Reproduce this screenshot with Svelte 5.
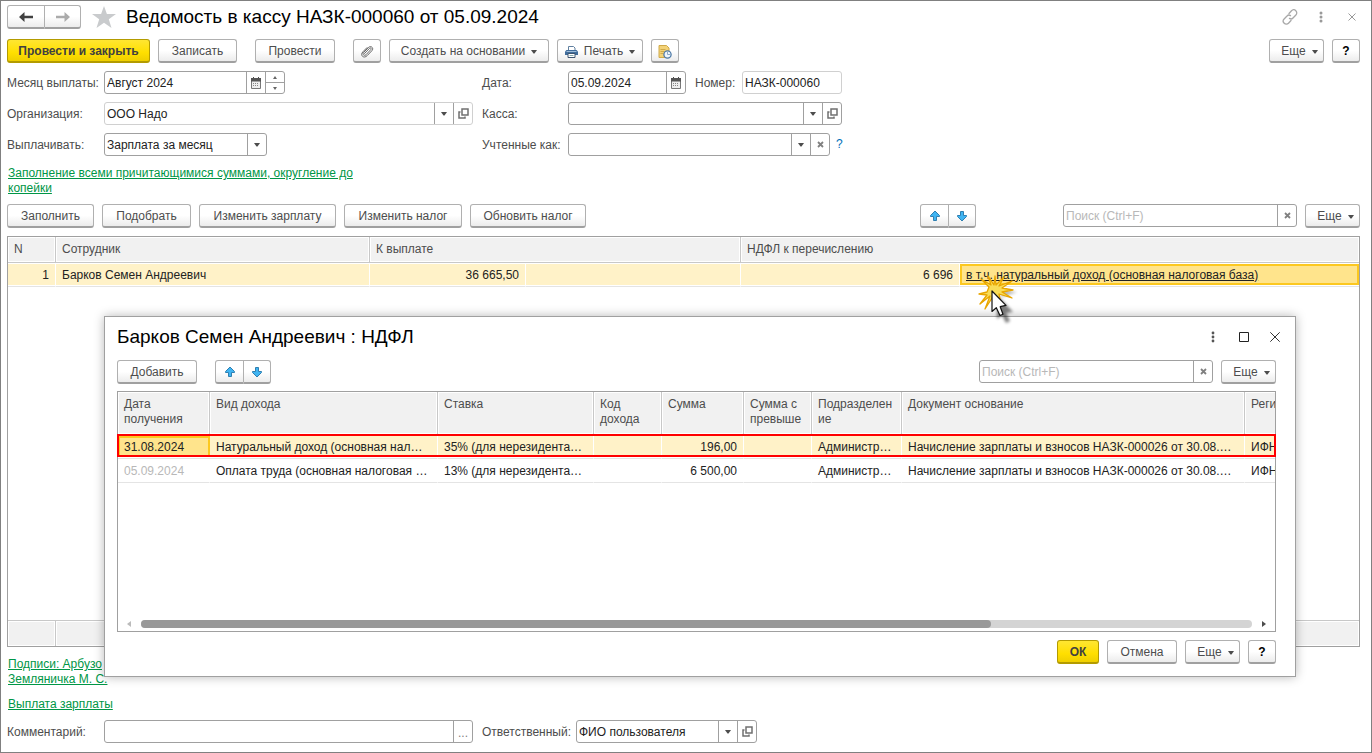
<script>
  let payMonth = $state('Август 2024');
  let docDate = $state('05.09.2024');
  let docNumber = $state('НАЗК-000060');
  let comment = $state('');
  let search = $state('');
  let dialogSearch = $state('');

  const incomeRows = [
    {
      date: '31.08.2024', kind: 'Натуральный доход (основная нал…',
      rate: '35% (для нерезидента…', sum: '196,00', dept: 'Администр…',
      doc: 'Начисление зарплаты и взносов НАЗК-000026 от 30.08.…', reg: 'ИФНС', selected: true
    },
    {
      date: '05.09.2024', kind: 'Оплата труда (основная налоговая …',
      rate: '13% (для нерезидента…', sum: '6 500,00', dept: 'Администр…',
      doc: 'Начисление зарплаты и взносов НАЗК-000026 от 30.08.…', reg: 'ИФНС', selected: false
    }
  ];
</script>

{#snippet caret()}
  <svg class="caret" width="6" height="4" viewBox="0 0 6 4" aria-hidden="true"><path d="M0 0h6L3.5 3.5h-1z" fill="#4d4d4d" /></svg>
{/snippet}

{#snippet calendar()}
  <svg width="10" height="12" viewBox="0 0 10 12" aria-hidden="true">
    <path d="M2 0h1v2H2zM7 0h1v2H7z" fill="#4d4d4d" />
    <path d="M.5 1.5h9v10h-9z" fill="#eee" stroke="#777" />
    <path d="M0 1h10v3.500H0z" fill="#555" />
    <path d="M2 6.500h6M2 8.500h6" stroke="#888" stroke-dasharray="1 1" />
  </svg>
{/snippet}

{#snippet openIcon()}
  <svg width="11" height="11" viewBox="0 0 11 11" fill="none" stroke="#707070" stroke-width="1.500" aria-hidden="true">
    <path d="M4 1h6v6H4z" /><path d="M2.500 4H1v6h6V8.500" />
  </svg>
{/snippet}

{#snippet cross()}
  <svg width="7" height="7" viewBox="0 0 7 7" aria-hidden="true"><path d="M1 1l5 5M6 1L1 6" stroke="#808080" stroke-width="1.800" /></svg>
{/snippet}

{#snippet moveButtons()}
  <div class="pair">
    <button class="btn" aria-label="Переместить вверх">
      <svg width="12" height="12" viewBox="0 0 12 12"><path d="M6 1L10.500 5.500v1H7.500v4h-3v-4h-3v-1z" fill="#3fb4f2" stroke="#2f7fb0" stroke-linejoin="round" /></svg>
    </button>
    <button class="btn" aria-label="Переместить вниз">
      <svg width="12" height="12" viewBox="0 0 12 12"><path d="M6 11L1.500 6.500v-1h3v-4h3v4h3v1z" fill="#3fb4f2" stroke="#2f7fb0" stroke-linejoin="round" /></svg>
    </button>
  </div>
{/snippet}

{#snippet more()}
  <button class="btn more">Еще {@render caret()}</button>
{/snippet}

<main class="window">
  <header class="titlebar">
    <div class="pair nav">
      <button class="btn" aria-label="Назад">
        <svg width="14" height="12" viewBox="0 0 14 12"><path d="M0 6l5.500-5v3.700H14v2.600H5.500V11z" fill="#404040" /></svg>
      </button>
      <button class="btn" aria-label="Вперед">
        <svg width="14" height="12" viewBox="0 0 14 12"><path d="M14 6L8.500 1v3.700H0v2.600h8.500V11z" fill="#ababab" /></svg>
      </button>
    </div>
    <button class="plain star" aria-label="В избранное">
      <svg width="24" height="22" viewBox="0 0 24 22"><path d="M12 0l2.900 8H24l-7.200 5.200L19.500 22 12 16.700 4.500 22l2.700-8.800L0 8h9.100z" fill="#c9cbcd" /></svg>
    </button>
    <h1>Ведомость в кассу НАЗК-000060 от 05.09.2024</h1>
    <div class="winicons push">
      <button class="plain" aria-label="Ссылка">
        <svg width="16" height="16" viewBox="0 0 16 16" fill="none" stroke="#a8a8a8" stroke-width="1.300" stroke-linecap="round">
          <path d="M7 4.500l2.500-2.700a2.900 2.900 0 0 1 4.400 4.200L11 9a2.700 2.700 0 0 1-3.500.4" />
          <path d="M9 11.500l-2.500 2.700a2.900 2.900 0 0 1-4.400-4.200L5 7a2.700 2.700 0 0 1 3.500-.4" />
        </svg>
      </button>
      <button class="plain" aria-label="Меню">
        <svg width="4" height="12" viewBox="0 0 4 12" fill="#999"><circle cx="2" cy="2" r="1.500" /><circle cx="2" cy="6" r="1.500" /><circle cx="2" cy="10" r="1.500" /></svg>
      </button>
      <button class="plain" aria-label="Закрыть">
        <svg width="8" height="8" viewBox="0 0 8 8"><path d="M.5.5l7 7M7.500.5l-7 7" stroke="#999" /></svg>
      </button>
    </div>
  </header>

  <div class="toolbar">
    <button class="btn primary w143">Провести и закрыть</button>
    <button class="btn w79">Записать</button>
    <button class="btn w80 apart">Провести</button>
    <button class="btn icon apart" aria-label="Файлы">
      <svg width="13" height="13" viewBox="0 0 13 13" fill="none" stroke="#666" stroke-linecap="round"><path d="M3.500 8.500l5-5.200c1-1 2.300.2 1.400 1.200L5 9.700c-1.700 1.700-4-.5-2.400-2.200L7.300 2.600C9.800 0 13.300 3 10.900 5.700L6.300 10.500c-2 2-3.800 1.700-4.800.8-1.100-1-1.200-2.900.4-4.500L6 2.600" /></svg>
    </button>
    <button class="btn w160">Создать на основании {@render caret()}</button>
    <button class="btn w86">
      <svg width="13" height="12" viewBox="0 0 13 12" aria-hidden="true">
        <path d="M3.500 4V.5h5l1.500 1.500V4" fill="#fff" stroke="#5f7f9f" />
        <path d="M1.500 4h10L13 5.500V9H0V5.500z" fill="#3f6c9b" /><path d="M1.500 5.500h10" stroke="#9dbbd8" />
        <path d="M3 7.500h7v4H3z" fill="#fff" stroke="#3d5570" /><path d="M4.500 9.500h4" stroke="#8aa" />
      </svg>
      Печать {@render caret()}
    </button>
    <button class="btn icon" aria-label="Отчеты">
      <svg width="14" height="14" viewBox="0 0 14 14"><path d="M1 .5h7.500L11 3v9.500H1z" fill="#f3d277" stroke="#d0aa4a" /><path d="M2.500 4.500h5M2.500 6.500h4M2.500 8.500h3" stroke="#d0aa4a" /><circle cx="9.500" cy="9.500" r="3.600" fill="#eef5fb" stroke="#4f7ba8" stroke-width="1.300" /><path d="M9.500 7v2.500H12" fill="none" stroke="#8fa9c4" /></svg>
    </button>
    <div class="group push">
      {@render more()}
      <button class="btn icon help">?</button>
    </div>
  </div>

  <div class="form">
    <div class="line">
      <div class="left">
        <label for="month">Месяц выплаты:</label>
        <div class="field w181">
          <input id="month" bind:value={payMonth} />
          <button aria-label="Выбрать месяц">{@render calendar()}</button>
          <div class="spin">
            <button aria-label="Следующий месяц"><svg width="4" height="3" viewBox="0 0 4 3"><path d="M2 0l2 3H0z" fill="#666" /></svg></button>
            <button aria-label="Предыдущий месяц"><svg width="4" height="3" viewBox="0 0 4 3"><path d="M2 3l2-3H0z" fill="#666" /></svg></button>
          </div>
        </div>
      </div>
      <label class="second" for="date">Дата:</label>
      <div class="field w118">
        <input id="date" bind:value={docDate} />
        <button aria-label="Выбрать дату">{@render calendar()}</button>
      </div>
      <label class="number" for="number">Номер:</label>
      <div class="field light w100"><input id="number" bind:value={docNumber} /></div>
    </div>

    <div class="line">
      <div class="left">
        <label for="org">Организация:</label>
        <div class="field light w369">
          <select id="org"><option>ООО Надо</option></select>
          <span class="drop">{@render caret()}</span>
          <button aria-label="Открыть организацию">{@render openIcon()}</button>
        </div>
      </div>
      <label class="second" for="cash">Касса:</label>
      <div class="field w274">
        <select id="cash"><option></option></select>
        <span class="drop">{@render caret()}</span>
        <button aria-label="Открыть кассу">{@render openIcon()}</button>
      </div>
    </div>

    <div class="line">
      <div class="left">
        <label for="pay">Выплачивать:</label>
        <div class="field w163">
          <select id="pay"><option>Зарплата за месяц</option></select>
          <span class="drop">{@render caret()}</span>
        </div>
      </div>
      <label class="second" for="as">Учтенные как:</label>
      <div class="field w262">
        <select id="as"><option></option></select>
        <span class="drop">{@render caret()}</span>
        <button aria-label="Очистить">{@render cross()}</button>
      </div>
      <button class="plain hint" aria-label="Подсказка">?</button>
    </div>
  </div>

  <p class="fill-link"><a href="#fill">Заполнение всеми причитающимися суммами, округление до копейки</a></p>

  <div class="toolbar">
    <button class="btn w87">Заполнить</button>
    <button class="btn w89">Подобрать</button>
    <button class="btn w137">Изменить зарплату</button>
    <button class="btn w118">Изменить налог</button>
    <button class="btn w116">Обновить налог</button>
    <div class="group push">
      {@render moveButtons()}
      <div class="field search">
        <input aria-label="Поиск" placeholder="Поиск (Ctrl+F)" bind:value={search} />
        <button aria-label="Очистить поиск">{@render cross()}</button>
      </div>
      {@render more()}
    </div>
  </div>

  <section class="grid main-grid">
    <table>
      <colgroup><col class="c48" /><col class="c314" /><col class="c156" /><col class="c215" /><col class="c219" /><col /></colgroup>
      <thead>
        <tr><th>N</th><th>Сотрудник</th><th colspan="2">К выплате</th><th colspan="2">НДФЛ к перечислению</th></tr>
      </thead>
      <tbody>
        <tr class="selected">
          <td class="num">1</td><td>Барков Семен Андреевич</td><td class="num">36 665,50</td><td></td>
          <td class="num">6 696</td><td class="active"><a href="#ndfl">в т.ч. натуральный доход (основная налоговая база)</a></td>
        </tr>
      </tbody>
    </table>
    <div class="totals"><span></span><span></span></div>
  </section>

  <div class="links">
    <p><a href="#signs">Подписи: Арбузо<br />Земляничка М. С.</a></p>
    <p><a href="#payout">Выплата зарплаты</a></p>
  </div>

  <div class="line">
    <div class="left">
      <label for="comment">Комментарий:</label>
      <div class="field w369">
        <input id="comment" bind:value={comment} />
        <button class="dots" aria-label="Редактировать комментарий">...</button>
      </div>
    </div>
    <label class="resp" for="resp">Ответственный:</label>
    <div class="field w181">
      <select id="resp"><option>ФИО пользователя</option></select>
      <span class="drop">{@render caret()}</span>
      <button aria-label="Открыть пользователя">{@render openIcon()}</button>
    </div>
  </div>

  <div class="dialog" role="dialog" aria-labelledby="dialog-title">
    <header class="dialog-title">
      <h2 id="dialog-title">Барков Семен Андреевич : НДФЛ</h2>
      <div class="winicons push">
        <button class="plain" aria-label="Меню диалога">
          <svg width="4" height="12" viewBox="0 0 4 12" fill="#555"><circle cx="2" cy="2" r="1.400" /><circle cx="2" cy="6" r="1.400" /><circle cx="2" cy="10" r="1.400" /></svg>
        </button>
        <button class="plain" aria-label="Развернуть">
          <svg width="10" height="10" viewBox="0 0 10 10"><path d="M.5.5h9v9h-9z" fill="none" stroke="#222" /></svg>
        </button>
        <button class="plain" aria-label="Закрыть диалог">
          <svg width="10" height="10" viewBox="0 0 10 10"><path d="M.3.3l9.400 9.400M9.700.3L.3 9.700" stroke="#333" /></svg>
        </button>
      </div>
    </header>

    <div class="toolbar">
      <button class="btn w80">Добавить</button>
      <div class="apart">{@render moveButtons()}</div>
      <div class="group push">
        <div class="field search">
          <input aria-label="Поиск в доходах" placeholder="Поиск (Ctrl+F)" bind:value={dialogSearch} />
          <button aria-label="Очистить поиск в доходах">{@render cross()}</button>
        </div>
        {@render more()}
      </div>
    </div>

    <div class="grid-wrap">
      <section class="grid">
        <table class="income">
          <colgroup>
            <col class="c92" /><col class="c228" /><col class="c156" /><col class="c68" /><col class="c82" />
            <col class="c68" /><col class="c90" /><col class="c343" /><col class="c90" />
          </colgroup>
          <thead>
            <tr>
              <th>Дата получения</th><th>Вид дохода</th><th>Ставка</th><th>Код дохода</th><th>Сумма</th>
              <th>Сумма с превыше</th><th class="break">Подразделение</th><th>Документ основание</th><th>Регис</th>
            </tr>
          </thead>
          <tbody>
            {#each incomeRows as row}
              <tr class:selected={row.selected}>
                <td class:active={row.selected} class:muted={!row.selected}>{row.date}</td>
                <td>{row.kind}</td><td>{row.rate}</td><td></td><td class="num">{row.sum}</td><td></td>
                <td>{row.dept}</td><td>{row.doc}</td><td>{row.reg}</td>
              </tr>
            {/each}
          </tbody>
        </table>
        <div class="scroll" aria-hidden="true">
          <svg width="4" height="6" viewBox="0 0 4 6"><path d="M4 0v6L0 3z" fill="#bbb" /></svg>
          <div class="track"><div class="thumb"></div></div>
          <svg width="4" height="6" viewBox="0 0 4 6"><path d="M0 0v6l4-3z" fill="#4d4d4d" /></svg>
        </div>
      </section>
      <div class="mark"></div>
    </div>

    <footer class="toolbar dialog-foot">
      <button class="btn primary w42">ОК</button>
      <button class="btn w70">Отмена</button>
      {@render more()}
      <button class="btn icon help">?</button>
    </footer>
  </div>

  <svg class="pointer" width="48" height="56" viewBox="0 0 48 56" aria-hidden="true">
    <defs><filter id="soft" x="-40%" y="-40%" width="200%" height="200%"><feGaussianBlur stdDeviation="1.800" /></filter></defs>
    <path d="M21 20l16 17-7 1 4 8-4 2-4-8-5 4z" fill="#000" opacity=".5" filter="url(#soft)" />
    <path d="M24 15l17 2-15 5z" fill="#000" opacity=".3" filter="url(#soft)" />
    <path d="M13 12L5 4l10 6-3-9 6 9 1-9 1 9 8-8-5 9 13-5-10 7 11 2-11 2 10 6-13-4 1 5-6-4-9 14 5-13-10 8 7-9-8-1 8-2z" fill="#f9dd58" stroke="#e8a500" stroke-width="1.300" stroke-linejoin="round" />
    <path d="M16 16v20.500l4.300-3.800 3.700 7.800 3-1.300-2.800-7.500 5.800-1.400z" fill="#fff" stroke="#111" stroke-width="1.200" stroke-linejoin="round" />
  </svg>
</main>

<style>
  :global(body) { margin: 0; background: #fff; }
  * { box-sizing: border-box; }
  .window {
    position: relative;
    display: flex;
    flex-direction: column;
    min-height: 100vh;
    padding: 4px 11px 9px 6px;
    border: 1px solid #808080;
    font: 12px/15px "Liberation Sans", Arial, sans-serif;
    color: #4d4d4d;
    background: #fff;
  }
  button, input, select { font: inherit; color: inherit; margin: 0; }
  h1, h2, p { margin: 0; }
  h1, h2 { font-size: 19px; line-height: 24px; font-weight: 400; color: #000; }
  a { color: #009646; text-decoration: underline; }
  svg { display: block; flex: none; }

  .titlebar, .toolbar, .line, .left, .group, .winicons, .dialog-title { display: flex; align-items: center; }
  .titlebar { height: 24px; }
  .titlebar h1 { margin-left: 10px; }
  .star { margin-left: 11px; }
  .push { margin-left: auto; }
  .plain { padding: 0; border: 0; background: none; }
  .winicons { gap: 15px; }
  .winicons .plain { display: flex; justify-content: center; width: 16px; }

  .toolbar { gap: 8px; height: 24px; flex: none; }
  .titlebar + .toolbar { margin-top: 10px; }
  .group { gap: 8px; }
  .apart { margin-left: 10px; }
  .btn {
    display: flex;
    align-items: center;
    justify-content: center;
    gap: 6px;
    height: 24px;
    padding: 2px 0 0;
    border: 1px solid #b0b0b0;
    border-bottom: 2px solid #a0a0a0;
    border-radius: 3px;
    background: linear-gradient(#fff 50%, #ececec);
    white-space: nowrap;
  }
  .primary { border-color: #b39b00; background: linear-gradient(#ffe632, #ffdf00 60%, #efcf00); font-weight: 700; color: #404040; }
  .icon { width: 28px; }
  .help { font-weight: 700; color: #000; }
  .more { width: 55px; padding-left: 6px; }
  .pair { display: flex; }
  .pair .btn { width: 28px; padding-top: 0; }
  .pair .btn:first-child { border-radius: 3px 0 0 3px; width: 29px; }
  .pair .btn:last-child { border-left: 0; border-radius: 0 3px 3px 0; width: 27px; }
  .nav .btn:first-child { width: 38px; }
  .nav .btn:last-child { width: 36px; }
  .group .pair { margin-right: 79px; }

  .form { display: flex; flex-direction: column; gap: 8px; margin-top: 8px; }
  .line { height: 23px; flex: none; }
  .left { width: 475px; }
  .left label { width: 97px; }
  .second { width: 86px; }
  .resp { width: 94px; }
  .number { width: 56px; padding-left: 9px; }
  label { padding-top: 1px; white-space: nowrap; }
  .field { display: flex; height: 23px; border: 1px solid #a0a0a0; border-radius: 3px; background: #fff; color: #222; }
  .light { border-color: #d0d0d0; }
  .field input, .field select { flex: 1; min-width: 0; padding: 1px 2px 0; border: 0; outline: 0; background: none; appearance: none; }
  .field input::placeholder { color: #b8b8b8; opacity: 1; }
  .field > button, .drop, .spin {
    display: flex; align-items: center; justify-content: center;
    width: 19px; padding: 0; border: 0; border-left: 1px solid #a0a0a0; background: none;
  }
  .field > .dots { padding-top: 4px; color: #808080; }
  .spin { flex-direction: column; align-items: stretch; }
  .spin button { flex: 1; display: flex; align-items: center; justify-content: center; padding: 0; border: 0; background: none; }
  .spin button + button { border-top: 1px solid #a0a0a0; }
  .search { width: 234px; align-self: flex-start; }
  .hint { margin-left: 6px; color: #0070ba; }

  .fill-link { width: 370px; margin: 10px 0 8px 1px; }
  .links { display: flex; flex-direction: column; gap: 10px; margin: 10px 0 8px 1px; }

  .grid { position: relative; display: flex; flex-direction: column; flex: 1; min-width: 0; overflow: hidden; border: 1px solid #a0a0a0; }
  .main-grid { margin-top: 8px; }
  table { width: 100%; table-layout: fixed; border-collapse: separate; border-spacing: 0; color: #222; }
  .income { width: 1217px; }
  th {
    height: 26px; padding: 5px 6px; font-weight: 400; text-align: left; vertical-align: top; color: #4d4d4d;
    background: #f1f1f1; border-right: 1px solid #c8c8c8; border-bottom: 1px solid #c8c8c8; box-shadow: inset 0 0 0 1px #fff;
  }
  .income th { height: 43px; }
  th:last-child { border-right: 0; }
  .break { word-break: break-all; }
  td {
    height: 24px; padding: 1px 6px 0; white-space: nowrap;
    border-right: 1px solid #fff; border-bottom: 1px solid #e4e4e4;
  }
  td.num { text-align: right; }
  td.muted { color: #b8b8b8; }
  .selected td { background: #fff2c8; box-shadow: inset 0 1px #fff, inset 0 -1px #fff; }
  .selected td.active {
    background: #ffe48c; border-right: 0;
    box-shadow: inset 0 1px #fff, inset 0 -1px #fff, inset 0 3px #fcc820, inset 0 -3px #fcc820, inset 2px 0 #fcc820, inset -2px 0 #fcc820;
  }
  td a { color: #222; }
  .c48 { width: 48px; } .c314 { width: 314px; } .c156 { width: 156px; } .c215 { width: 215px; } .c219 { width: 219px; }
  .c92 { width: 92px; } .c228 { width: 228px; } .c68 { width: 68px; } .c82 { width: 82px; } .c90 { width: 90px; } .c343 { width: 343px; }
  .totals { display: flex; height: 26px; margin-top: auto; border-top: 1px solid #c8c8c8; }
  .totals span { flex: 1; background: #f1f1f1; box-shadow: inset 0 0 0 1px #fff; }
  .totals span:first-child { flex: none; width: 48px; border-right: 1px solid #c8c8c8; }

  .dialog {
    position: absolute; left: 103px; right: 75px; top: 315px; bottom: 75px;
    display: flex; flex-direction: column; padding: 8px 19px 12px 12px;
    border: 1px solid #a0a0a0; background: #fff; box-shadow: 0 0 10px rgb(0 0 0 / 28%);
  }
  .dialog-title { height: 24px; margin-bottom: 11px; }
  .dialog .winicons { margin-right: -7px; }
  .grid-wrap { position: relative; display: flex; flex: 1; margin: 7px 0 8px; min-height: 0; }
  .mark { position: absolute; left: 0; right: 0; top: 43px; height: 23px; border: 2px solid #f00; }
  .scroll { display: flex; align-items: center; gap: 10px; height: 8px; margin: auto 9px 3px; }
  .track { flex: 1; height: 8px; border-radius: 4px; background: #d4d4d4; }
  .thumb { width: 76.5%; height: 8px; border-radius: 4px; background: #999; }
  .dialog-foot { justify-content: flex-end; }
  .pointer { position: absolute; left: 975px; top: 274px; }

  .w42 { width: 42px; } .w70 { width: 70px; } .w79 { width: 79px; } .w80 { width: 80px; } .w86 { width: 86px; } .w87 { width: 87px; } .w89 { width: 89px; }
  .w100 { width: 100px; } .w116 { width: 116px; } .w118 { width: 118px; } .w137 { width: 137px; } .w143 { width: 143px; }
  .w160 { width: 160px; } .w163 { width: 163px; } .w181 { width: 181px; } .w262 { width: 262px; } .w274 { width: 274px; } .w369 { width: 369px; }
</style>
